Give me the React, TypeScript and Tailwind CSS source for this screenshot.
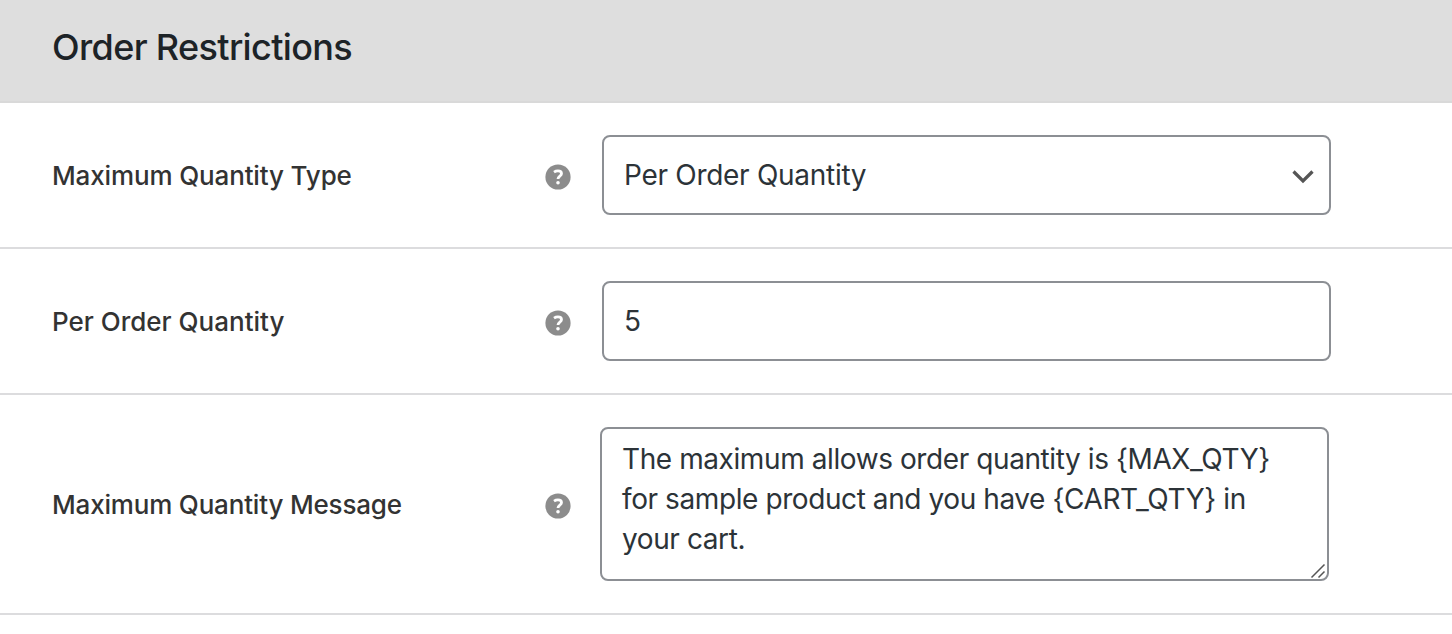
import type { ReactNode } from 'react';

function HelpTip() {
  return (
    <svg className="mt-[3px] h-[26px] w-[26px] shrink-0" viewBox="0 0 26 26" aria-hidden="true">
      <circle cx="13" cy="13" r="12.6" fill="#8c8c8c" />
      <path
        d="M9 8.1c1.200-.8 2.500-1.200 3.900-1.200 2.200 0 3.600 1 3.600 2.800 0 2.500-3.500 2.500-3.500 5.300"
        fill="none"
        stroke="#fff"
        strokeWidth="2.800"
      />
      <circle cx="13" cy="18.700" r="1.800" fill="#fff" />
    </svg>
  );
}

type SettingRowProps = {
  label: string;
  className: string;
  labelClass?: string;
  children: ReactNode;
};

function SettingRow({ label, className, labelClass = '', children }: SettingRowProps) {
  return (
    <div className={`flex items-center border-b-2 border-[#dcdcde] ${className}`}>
      <div className="flex w-[571px] shrink-0 items-center justify-between pl-[52px]">
        <span className={`text-[26px] font-medium text-[#333] ${labelClass}`}>{label}</span>
        <HelpTip />
      </div>
      {children}
    </div>
  );
}

const field = 'w-[729px] rounded-[8px] border-2 border-[#8c8f94] bg-white text-[28px] text-[#2c3338]';

export default function App() {
  return (
    <div className="h-[634px] overflow-hidden bg-white font-['Inter',sans-serif]">
      {/* Section heading */}
      <div className="h-[103px] border-b-2 border-[#d9d9d9] bg-[#dedede] pt-[25px] pl-[52px]">
        <h2 className="text-[36px] leading-[44px] font-medium tracking-[-0.65px] text-[#1d2327]">Order Restrictions</h2>
      </div>

      <SettingRow label="Maximum Quantity Type" className="h-[146px]" labelClass="tracking-[-0.14px]">
        <div className={`${field} ml-[31px] flex h-[80px] items-center justify-between pr-[14px] pl-[20px]`}>
          <span className="tracking-[-0.29px]">Per Order Quantity</span>
          <svg className="mt-px h-6 w-6" viewBox="0 0 24 24" fill="none" stroke="#555" strokeWidth="3.200">
            <path d="M2.500 7.500l9.500 9.500L21.500 7.500" />
          </svg>
        </div>
      </SettingRow>

      <SettingRow label="Per Order Quantity" className="h-[146px]">
        <div className={`${field} ml-[31px] flex h-[80px] items-center pl-[20px]`}>5</div>
      </SettingRow>

      <SettingRow label="Maximum Quantity Message" className="h-[220px]" labelClass="tracking-[-0.18px]">
        <div className={`${field} relative ml-[29px] h-[154px] pt-[10px] pl-[20px] leading-[40px] tracking-[-0.41px]`}>
          <p>The maximum allows order quantity is {'{MAX_QTY}'}</p>
          <p>for sample product and you have {'{CART_QTY}'} in</p>
          <p>your cart.</p>
          {/* Resize grip */}
          <svg className="absolute right-[1px] bottom-0 h-4 w-4" viewBox="0 0 16 16" stroke="#555" strokeWidth="1.500">
            <path d="M1.500 14.500L14.500 1.500M8.500 14.500l6-6" />
          </svg>
        </div>
      </SettingRow>
    </div>
  );
}
